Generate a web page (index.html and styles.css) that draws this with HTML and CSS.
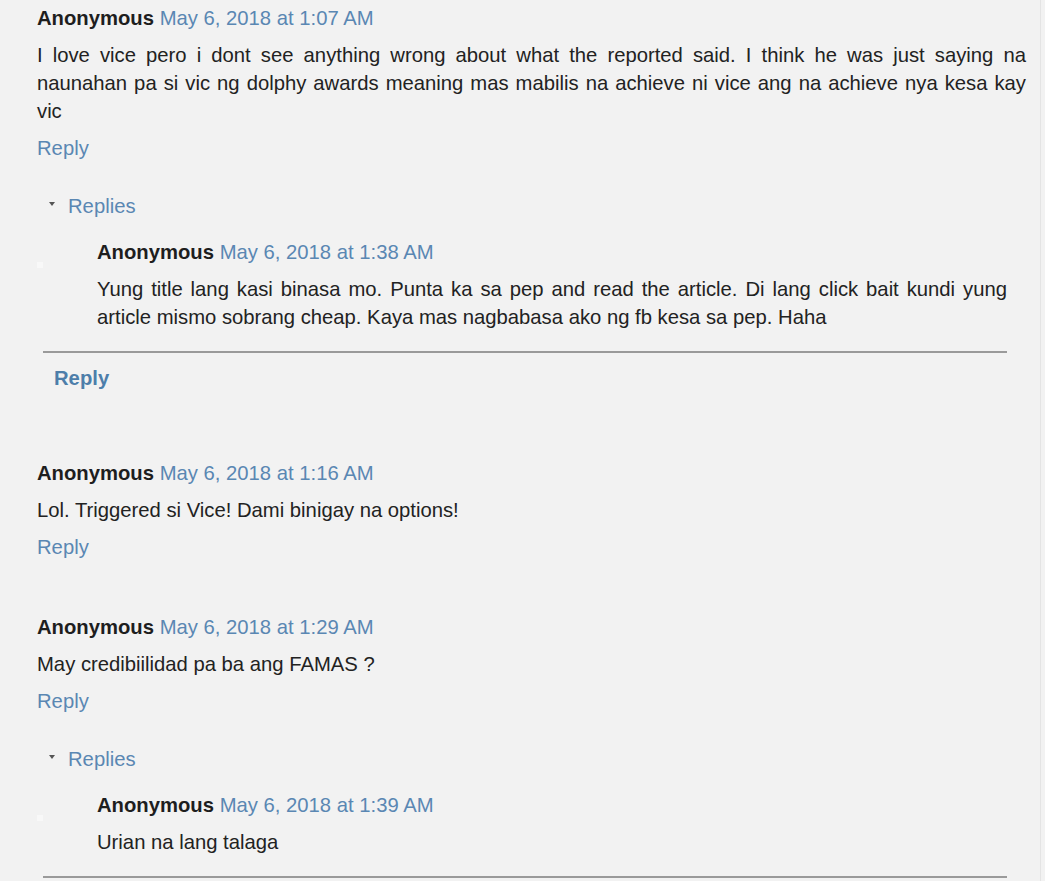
FILE: index.html
```html
<!DOCTYPE html>
<html lang="tl">
<head>
<meta charset="utf-8">
<title>Comments</title>
<link rel="stylesheet" href="styles.css">
</head>
<body>
<div class="page">
  <div class="comments">

    <div class="comment">
      <div class="comment-header"><span class="author">Anonymous</span> <a class="date" href="#">May 6, 2018 at 1:07 AM</a></div>
      <p class="comment-body">I love vice pero i dont see anything wrong about what the reported said. I think he was just saying na naunahan pa si vic ng dolphy awards meaning mas mabilis na achieve ni vice ang na achieve nya kesa kay vic</p>
      <div class="comment-actions"><a href="#">Reply</a></div>
      <div class="thread">
        <div class="thread-toggle"><span class="caret"></span><a href="#">Replies</a></div>
        <div class="reply">
          <div class="avatar"></div>
          <div class="reply-content">
            <div class="comment-header"><span class="author">Anonymous</span> <a class="date" href="#">May 6, 2018 at 1:38 AM</a></div>
            <p class="comment-body">Yung title lang kasi binasa mo. Punta ka sa pep and read the article. Di lang click bait kundi yung article mismo sobrang cheap. Kaya mas nagbabasa ako ng fb kesa sa pep. Haha</p>
          </div>
        </div>
        <div class="thread-rule"></div>
        <div class="thread-reply"><a href="#">Reply</a></div>
      </div>
    </div>

    <div class="comment">
      <div class="comment-header"><span class="author">Anonymous</span> <a class="date" href="#">May 6, 2018 at 1:16 AM</a></div>
      <p class="comment-body">Lol. Triggered si Vice! Dami binigay na options!</p>
      <div class="comment-actions"><a href="#">Reply</a></div>
    </div>

    <div class="comment">
      <div class="comment-header"><span class="author">Anonymous</span> <a class="date" href="#">May 6, 2018 at 1:29 AM</a></div>
      <p class="comment-body">May credibiilidad pa ba ang FAMAS ?</p>
      <div class="comment-actions"><a href="#">Reply</a></div>
      <div class="thread">
        <div class="thread-toggle"><span class="caret"></span><a href="#">Replies</a></div>
        <div class="reply">
          <div class="avatar"></div>
          <div class="reply-content">
            <div class="comment-header"><span class="author">Anonymous</span> <a class="date" href="#">May 6, 2018 at 1:39 AM</a></div>
            <p class="comment-body">Urian na lang talaga</p>
          </div>
        </div>
        <div class="thread-rule"></div>
      </div>
    </div>

  </div>
</div>
</body>
</html>
```

FILE: styles.css
```css
html, body {
  margin: 0;
  padding: 0;
  background: #f2f2f2;
}

body {
  font-family: "Liberation Sans", Arial, sans-serif;
  font-size: 20.25px;
  line-height: 28px;
  color: #222;
  height: 881px;
  overflow: hidden;
}

.page {
  width: 1041px;
  min-height: 881px;
  border-right: 1px solid #e4e4e4;
  box-sizing: border-box;
}

.comments {
  padding: 4px 14px 0 37px;
}

a {
  color: #5a87b3;
  text-decoration: none;
}

.comment + .comment {
  margin-top: 52px;
}

.comment-header {
  height: 28px;
  white-space: nowrap;
}

.author {
  font-weight: bold;
  color: #1e1e1e;
}

.comment-body {
  margin: 9px 0 0;
  text-align: justify;
}

.comment-actions {
  margin-top: 9px;
}

.thread {
  margin: 30px 19px 0 0;
  padding-bottom: 15px;
}

.thread-toggle {
  display: flex;
  align-items: center;
  padding-left: 12px;
}

.caret {
  width: 0;
  height: 0;
  border-left: 3px solid transparent;
  border-right: 3px solid transparent;
  border-top: 4px solid #555;
  margin-right: 13px;
  margin-top: -4px;
}

.reply {
  display: flex;
  margin-top: 18px;
}

.avatar {
  width: 6px;
  height: 6px;
  margin: 24px 54px 0 0;
  background: #f8f8f8;
}

.reply-content {
  flex: 1;
}

.thread-rule {
  margin: 20px 0 0 6px;
  height: 2px;
  background: #9a9a9a;
  box-shadow: 0 -4px 0 -1px #fafafa, 0 4px 0 -1px #fafafa;
}

.thread-reply {
  margin-top: 11px;
  padding-left: 17px;
  font-weight: bold;
}

.thread-reply a {
  color: #4d7eaa;
}
```
